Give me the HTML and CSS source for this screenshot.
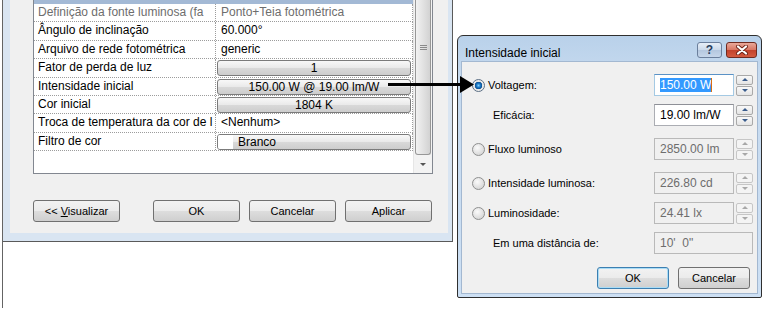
FILE: index.html
```html
<!DOCTYPE html>
<html lang="pt">
<head>
  <meta charset="UTF-8">
  <title>Intensidade inicial</title>
  <link rel="stylesheet" href="styles.css">
</head>
<body>

<div class="screen">

  <!-- janela de propriedades (fundo) -->
  <div class="win">
    <div class="win-body">
      <div class="grid">
        <div class="rows">
          <div class="rows-head"></div>
          <div class="row muted">
            <div class="name">Definição da fonte luminosa (fa</div>
            <div class="value">Ponto+Teia fotométrica</div>
          </div>
          <div class="row">
            <div class="name">Ângulo de inclinação</div>
            <div class="value">60.000°</div>
          </div>
          <div class="row">
            <div class="name">Arquivo de rede fotométrica</div>
            <div class="value">generic</div>
          </div>
          <div class="row">
            <div class="name">Fator de perda de luz</div>
            <div class="value has-btn"><div class="cell-btn">1</div></div>
          </div>
          <div class="row">
            <div class="name">Intensidade inicial</div>
            <div class="value has-btn"><div class="cell-btn">150.00 W @ 19.00 lm/W</div></div>
          </div>
          <div class="row">
            <div class="name">Cor inicial</div>
            <div class="value has-btn"><div class="cell-btn">1804 K</div></div>
          </div>
          <div class="row">
            <div class="name">Troca de temperatura da cor de l</div>
            <div class="value">&lt;Nenhum&gt;</div>
          </div>
          <div class="row">
            <div class="name">Filtro de cor</div>
            <div class="value has-btn"><div class="cell-btn color-btn"><span class="swatch"></span>Branco</div></div>
          </div>
        </div>
        <div class="scrollbar">
          <div class="thumb"><span class="grip"></span></div>
          <div class="scroll-down"><span class="tri-down"></span></div>
        </div>
      </div>

      <div class="actions">
        <button class="btn"><< <u>V</u>isualizar</button>
        <button class="btn push">OK</button>
        <button class="btn">Cancelar</button>
        <button class="btn">Aplicar</button>
      </div>
    </div>
  </div>

  <!-- caixa de diálogo -->
  <div class="dialog">
    <div class="titlebar">
      <span class="title">Intensidade inicial</span>
      <span class="tb-help">?</span>
      <span class="tb-close">
        <svg width="14" height="10" viewBox="0 0 14 10">
          <path d="M3 1.5 L11 8.5 M11 1.5 L3 8.5" stroke="#6e2418" stroke-width="4" stroke-linecap="round"/>
          <path d="M3 1.5 L11 8.5 M11 1.5 L3 8.5" stroke="#fff" stroke-width="2.2" stroke-linecap="round"/>
        </svg>
      </span>
    </div>

    <div class="dlg-body">
      <div class="field">
        <span class="radio checked"></span>
        <span class="label">Voltagem:</span>
        <div class="input focus"><span class="sel">150.00 W</span><span class="caret"></span></div>
        <div class="spin"><span class="up"></span><span class="down"></span></div>
      </div>
      <div class="field">
        <span class="label sub">Eficácia:</span>
        <div class="input">19.00 lm/W</div>
        <div class="spin"><span class="up"></span><span class="down"></span></div>
      </div>
      <div class="field sep">
        <span class="radio"></span>
        <span class="label">Fluxo luminoso</span>
        <div class="input off">2850.00 lm</div>
        <div class="spin off"><span class="up"></span><span class="down"></span></div>
      </div>
      <div class="field sep">
        <span class="radio"></span>
        <span class="label">Intensidade luminosa:</span>
        <div class="input off">226.80 cd</div>
        <div class="spin off"><span class="up"></span><span class="down"></span></div>
      </div>
      <div class="field">
        <span class="radio"></span>
        <span class="label">Luminosidade:</span>
        <div class="input off">24.41 lx</div>
        <div class="spin off"><span class="up"></span><span class="down"></span></div>
      </div>
      <div class="field">
        <span class="label sub">Em uma distância de:</span>
        <div class="input off wide">10'&nbsp; 0"</div>
      </div>

      <div class="dlg-actions">
        <button class="btn default">OK</button>
        <button class="btn">Cancelar</button>
      </div>
    </div>
  </div>

  <!-- seta de chamada -->
  <svg class="pointer" width="88" height="20" viewBox="0 0 88 20">
    <rect x="0" y="8" width="74" height="3" fill="#000"/>
    <polygon points="72,1 86,9.5 72,18" fill="#000"/>
  </svg>

</div>

</body>
</html>
```

FILE: styles.css
```css
body {
  margin: 0;
  padding-left: 2px;
  background: #fff;
  font-family: "Liberation Sans", Arial, sans-serif;
  font-size: 11px;
  color: #000;
}
.screen {
  position: relative;
  display: flex;
  align-items: flex-start;
  height: 308px;
  border-left: 1px solid #646464;
}

/* janela de fundo */
.win {
  width: 450px;
  height: 242px;
  box-sizing: border-box;
  background: #d9e5f2;
  border-right: 1px solid #5a5a5a;
  border-bottom: 1px solid #5a5a5a;
  padding: 0 4px 8px 7px;
}
.win-body {
  height: 233px;
  background: #f0f0f0;
  padding: 0 15px 0 23px;
}
.grid {
  display: flex;
  height: 174px;
  box-sizing: border-box;
  border: 1px solid #828790;
  border-top: none;
  background: #fff;
}
.rows {
  width: 379px;
  font-size: 12px;
}
.rows-head {
  height: 4px;
  background: #a3b9d5;
}
.row {
  display: flex;
  height: 18.4px;
  box-sizing: border-box;
  border-bottom: 1px dotted #9c9c9c;
  border-right: 1px dotted #9c9c9c;
  line-height: 17px;
}
.name {
  width: 177px;
  padding-left: 4px;
  border-right: 1px dotted #9c9c9c;
  white-space: nowrap;
  overflow: hidden;
}
.value {
  flex: 1;
  padding-left: 5px;
  white-space: nowrap;
}
.row.muted {
  color: #6d6d6d;
}
.value.has-btn {
  padding: 1px 1px 0 1px;
}
.cell-btn {
  height: 16px;
  box-sizing: border-box;
  border: 1px solid #7b7b7b;
  border-radius: 3px;
  background: linear-gradient(#f8f8f8, #e9e9e9 50%, #d9d9d9 51%, #cdcdcd);
  text-align: center;
  line-height: 14px;
}
.color-btn {
  display: flex;
  text-align: left;
}
.swatch {
  width: 15px;
  height: 14px;
  background: #fff;
  margin-right: 5px;
  border-radius: 2px 0 0 2px;
}

/* barra de rolagem */
.scrollbar {
  flex: 1;
  display: flex;
  flex-direction: column;
  background: #f3f3f3;
  border-left: 1px solid #e6e6e6;
}
.thumb {
  height: 155px;
  margin: 0 1px;
  box-sizing: border-box;
  border: 1px solid #979797;
  border-top: none;
  border-radius: 0 0 3px 3px;
  background: linear-gradient(to right, #f2f2f2, #e2e2e2 50%, #d2d2d2);
  padding-top: 45px;
}
.grip {
  display: block;
  width: 7px;
  height: 5px;
  margin: 0 auto;
  background: repeating-linear-gradient(#8a8a8a 0 1px, transparent 1px 2px);
}
.scroll-down {
  flex: 1;
  display: flex;
  align-items: center;
  justify-content: center;
}
.tri-down {
  width: 0;
  height: 0;
  border-left: 3px solid transparent;
  border-right: 3px solid transparent;
  border-top: 3px solid #555;
}

/* botões */
.actions {
  display: flex;
  gap: 9px;
  margin-top: 26px;
}
.btn {
  width: 87px;
  height: 22px;
  padding: 0;
  border: 1px solid #707070;
  border-radius: 3px;
  background: linear-gradient(#f2f2f2, #ebebeb 50%, #dddddd 51%, #cfcfcf);
  font-family: inherit;
  font-size: 11px;
  color: #000;
}
.btn.push {
  margin-left: 24px;
}

/* diálogo */
.dialog {
  display: flex;
  flex-direction: column;
  width: 305px;
  height: 263px;
  box-sizing: border-box;
  margin: 35px 0 0 4px;
  border: 1px solid #2f2f2f;
  border-radius: 6px 6px 2px 2px;
  background: linear-gradient(#b9d1ea, #c6daef 40px, #cde0f4);
  padding: 0 3px 3px 3px;
}
.titlebar {
  display: flex;
  align-items: flex-start;
  height: 25px;
  padding-top: 6px;
  box-sizing: border-box;
}
.title {
  flex: 1;
  padding: 4px 0 0 4px;
  font-size: 12px;
  color: #000;
}
.tb-help,
.tb-close {
  height: 16px;
  box-sizing: border-box;
  border-radius: 3px;
  display: flex;
  align-items: center;
  justify-content: center;
}
.tb-help {
  width: 25px;
  margin-right: 4px;
  border: 1px solid #6b7f9c;
  background: linear-gradient(#e7eef7, #cbd9ea 50%, #b4c7df 51%, #c6d6ea);
  font-size: 12px;
  font-weight: bold;
  color: #273c5d;
}
.tb-close {
  width: 31px;
  margin-right: 1px;
  border: 1px solid #6f2a20;
  background: linear-gradient(#e9a99a, #d87563 50%, #c2412b 51%, #d45a3f);
}
.dlg-body {
  flex: 1;
  border: 1px solid #a3b8d1;
  background: #f0f0f0;
  padding: 12px 4px 0 10px;
}
.field {
  display: flex;
  align-items: center;
  height: 22px;
}
.field + .field {
  margin-top: 8px;
}
.field.sep {
  margin-top: 12px;
}
.label {
  flex: 1;
}
.label.sub {
  padding-left: 21px;
}
.radio {
  width: 13px;
  height: 13px;
  box-sizing: border-box;
  margin-right: 3px;
  border: 1px solid #8e8f8f;
  border-radius: 50%;
  background: radial-gradient(circle at 40% 35%, #fbfbfb, #dadada 70%, #cdcdcd);
}
.radio.checked {
  border-color: #5c6f85;
  background: radial-gradient(circle, #7fd0ff 0, #1b78c6 2px, #0b4e8f 3.5px, #e4e4e4 4px, #f2f2f2 6px);
}
.input {
  width: 80px;
  height: 22px;
  box-sizing: border-box;
  border: 1px solid #abadb3;
  border-top-color: #8e9097;
  background: #fff;
  padding-left: 5px;
  display: flex;
  align-items: center;
  font-size: 12px;
}
.input.focus {
  border-color: #a4c9e3;
  border-top-color: #5b92c6;
}
.input.off {
  background: #f0f0f0;
  border-color: #b9b9b9;
  color: #6d6d6d;
}
.input.wide {
  width: 99px;
}
.sel {
  background: #3399ff;
  color: #fff;
  line-height: 14px;
}
.caret {
  width: 1px;
  height: 14px;
  background: #d86f12;
}
.spin {
  display: flex;
  flex-direction: column;
  gap: 1px;
  margin-left: 2px;
}
.spin span {
  position: relative;
  width: 17px;
  height: 10px;
  box-sizing: border-box;
  border: 1px solid #a9a9a9;
  border-radius: 2px;
  background: linear-gradient(#f9f9f9, #e4e4e4);
  display: flex;
  align-items: center;
  justify-content: center;
}
.spin .up::before {
  content: "";
  border-left: 3px solid transparent;
  border-right: 3px solid transparent;
  border-bottom: 3px solid #3a5c8c;
}
.spin .down::before {
  content: "";
  border-left: 3px solid transparent;
  border-right: 3px solid transparent;
  border-top: 3px solid #3a5c8c;
}
.spin.off span {
  border-color: #c6c6c6;
  background: #f4f4f4;
}
.spin.off .up::before {
  border-bottom-color: #a8a8a8;
}
.spin.off .down::before {
  border-top-color: #a8a8a8;
}
.dlg-actions {
  display: flex;
  justify-content: flex-end;
  gap: 9px;
  margin-top: 13px;
  padding-right: 3px;
}
.dlg-actions .btn {
  width: 72px;
}
.btn.default {
  border-color: #3c7fb1;
  box-shadow: inset 0 0 0 1px #a9dcf6;
}

/* seta */
.pointer {
  position: absolute;
  left: 385px;
  top: 75px;
}
```
